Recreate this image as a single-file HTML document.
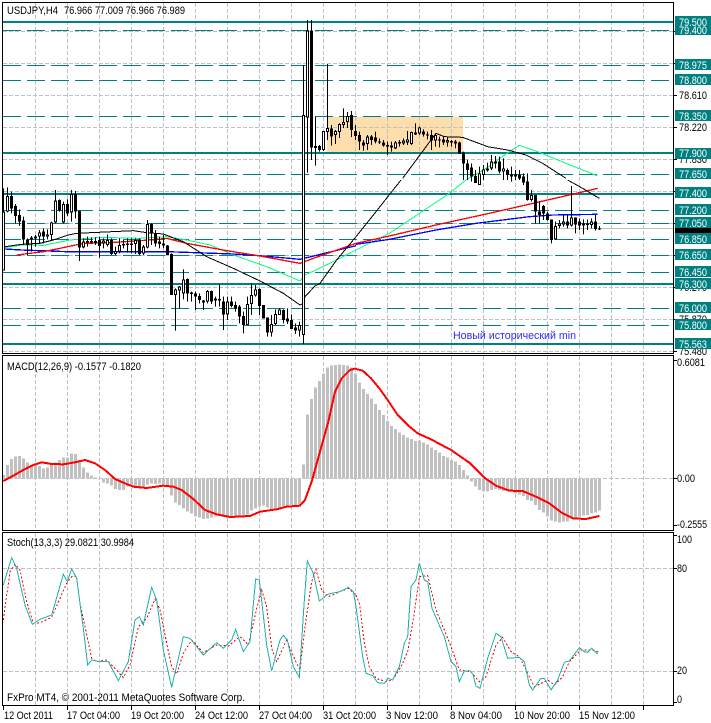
<!DOCTYPE html>
<html><head><meta charset="utf-8"><style>
html,body{margin:0;padding:0;background:#fff;width:711px;height:723px;overflow:hidden}
svg{display:block}
text{font-family:"Liberation Sans","Noto Sans CJK SC",sans-serif;font-size:11px;fill:#000}
.w text{fill:#fff}
.c{shape-rendering:crispEdges;fill:none}
</style></head><body>
<svg width="711" height="723" viewBox="0 0 711 723">
<rect width="711" height="723" fill="#fff"/>
<!-- peach -->
<rect x="327" y="117" width="136" height="36" fill="#ffdead"/>
<!-- grid -->
<path class="c" stroke="#c0c0c0" stroke-dasharray="4 2" d="M35.5 3V353M67.5 3V353M99.5 3V353M131.5 3V353M163.5 3V353M195.5 3V353M227.5 3V353M259.5 3V353M291.5 3V353M323.5 3V353M355.5 3V353M387.5 3V353M419.5 3V353M451.5 3V353M483.5 3V353M515.5 3V353M547.5 3V353M579.5 3V353M611.5 3V353M643.5 3V353
M35.5 356V530M67.5 356V530M99.5 356V530M131.5 356V530M163.5 356V530M195.5 356V530M227.5 356V530M259.5 356V530M291.5 356V530M323.5 356V530M355.5 356V530M387.5 356V530M419.5 356V530M451.5 356V530M483.5 356V530M515.5 356V530M547.5 356V530M579.5 356V530M611.5 356V530M643.5 356V530
M35.5 533V705M67.5 533V705M99.5 533V705M131.5 533V705M163.5 533V705M195.5 533V705M227.5 533V705M259.5 533V705M291.5 533V705M323.5 533V705M355.5 533V705M387.5 533V705M419.5 533V705M451.5 533V705M483.5 533V705M515.5 533V705M547.5 533V705M579.5 533V705M611.5 533V705M643.5 533V705
M3 31.5H673M3 63.5H673M3 95.5H673M3 127.5H673M3 159.5H673M3 191.5H673M3 223.5H673M3 255.5H673M3 287.5H673M3 319.5H673M3 351.5H673
M3 478.5H673M3 568.5H673M3 671.5H673"/>
<path class="c" stroke="#c0c0c0" d="M3 228.5H673"/>
<!-- levels -->
<path class="c" stroke="#008080" stroke-dasharray="18 6" d="M3 30.5H673M3 65.5H673M3 80.5H673M3 116.5H673M3 174.5H673M3 210.5H673M3 223.5H673M3 239.5H673M3 255.5H673M3 272.5H673M3 308.5H673M3 325.5H673"/>
<path class="c" stroke="#008080" stroke-width="2" d="M3 22H673M3 153H673M3 194H673M3 284H673M3 344H673"/>
<!-- MAs under candles -->
<g transform="translate(0 180) scale(.33333)" class="c" stroke-width="3">
<polyline stroke="#00ff7f" fill="none" points="15,203 65,195 130,196 210,180 300,172 420,175 500,170 560,180 630,195 700,225 800,260 900,303 915,285 1000,245 1068,210"/>
<polyline stroke="#0000ff" fill="none" stroke-width="4" points="15,207 65,210 200,215 500,215 700,222 790,228 900,238 1068,197"/>
<polyline stroke="#ff0000" fill="none" stroke-width="4" points="50,225 130,215 180,205 250,190 330,188 450,180 500,175 560,190 680,212 780,228 900,250 940,235 1068,190"/>
<polyline stroke="#000" fill="none" points="15,200 65,193 120,190 160,180 205,165 230,160 295,157 400,152 440,158 490,162 550,185 620,230 700,265 780,303 850,340 900,375 910,370 915,350 945,318 960,310 1010,240 1068,170"/>
</g>
<g transform="translate(356 180) scale(.33333)" class="c" stroke-width="3">
<polyline stroke="#00ff7f" fill="none" points="0,210 100,160 280,40 330,0"/>
<polyline stroke="#ff0000" fill="none" stroke-width="4" points="0,190 100,168 240,135 400,100 640,45 725,25"/>
<polyline stroke="#0000ff" fill="none" stroke-width="4" points="0,193 100,178 240,150 360,130 520,110 590,105 725,103"/>
<polyline stroke="#000" fill="none" points="0,170 60,95 135,0"/>
<polyline stroke="#000" fill="none" points="635,0 680,25 730,55"/>
</g>
<g transform="translate(356 0) scale(.33333)" class="c" stroke-width="3">
<polyline stroke="#00ff7f" fill="none" points="330,540 390,505 460,455 490,436 545,455 630,490 725,528"/>
<polyline stroke="#000" fill="none" points="140,535 225,420 240,400 265,410 320,412 395,440 455,450 510,465 560,490 630,535"/>
</g>
<!-- candles left -->
<g transform="translate(0 180) scale(1 .33333)" class="c">
<path stroke="#000" d="M3.5 25V272M7.5 22V97M11.5 35V100M15.5 72V130M19.5 88V138M23.5 110V195M27.5 175V225M31.5 168V215M35.5 165V200M39.5 150V190M43.5 145V190M47.5 148V178M51.5 125V180M55.5 30V130M59.5 58V95M63.5 65V130M67.5 58V108M71.5 30V125M75.5 33V115M79.5 92V243M83.5 175V205M87.5 170V200M91.5 172V190M95.5 172V195M99.5 170V233M103.5 175V205M107.5 163V200M111.5 175V225M115.5 200V225M119.5 175V220M123.5 180V205M127.5 175V218M131.5 175V220M135.5 175V222M139.5 175V225M143.5 195V225M147.5 120V205M151.5 130V195M155.5 150V200M159.5 170V205M163.5 165V205M167.5 195V225M171.5 220V345M175.5 325V452M179.5 318V385M183.5 268V358M187.5 295V365M191.5 335V365M195.5 335V390M199.5 340V370M203.5 360V390M207.5 330V370M211.5 332V372M215.5 350V380M219.5 313V380M223.5 350V450M227.5 350V420M231.5 350V382M235.5 365V395M239.5 375V430M243.5 395V460M247.5 350V435M251.5 310V405M255.5 315V350M259.5 325V405M263.5 375V415M267.5 412V470M271.5 405V470M275.5 388V435M279.5 385V405M283.5 388V430M287.5 385V432M291.5 403V447M295.5 430V462M299.5 425V470"/>
<path stroke="#000" stroke-width="3" d="M3.5 95V272M7.5 48V95M11.5 48V85M15.5 78V108M19.5 105V125M23.5 122V178M27.5 178V195M31.5 172V178M35.5 170V175M39.5 157V170M43.5 155V170M47.5 163V170M51.5 127V165M55.5 62V127M59.5 60V92M63.5 72V127M67.5 72V100M71.5 42V97M75.5 42V95M79.5 93V202M83.5 185V202M87.5 183V188M91.5 183V188M95.5 183V190M99.5 180V198M103.5 182V190M107.5 180V195M111.5 180V222M115.5 213V222M119.5 195V215M123.5 192V197M127.5 190V195M131.5 190V195M135.5 180V192M139.5 180V222M143.5 200V220M147.5 132V203M151.5 132V160M155.5 160V190M159.5 185V192M163.5 190V197M167.5 197V225M171.5 222V345M175.5 328V345M179.5 320V332M183.5 298V340M187.5 297V340M191.5 337V342M195.5 340V350M199.5 348V360M203.5 362V368M207.5 333V365M211.5 333V365M215.5 355V362M219.5 357V362M223.5 365V403M227.5 365V403M231.5 365V378M235.5 375V385M239.5 380V410M243.5 408V435M247.5 372V435M251.5 345V372M255.5 328V347M259.5 327V378M263.5 375V415M267.5 412V458M271.5 432V458M275.5 402V432M279.5 388V405M283.5 390V420M287.5 415V425M291.5 420V447M295.5 443V452M299.5 435V452"/>
<path stroke="#fff" d="M3.5 98V269M7.5 51V92M39.5 160V167M47.5 166V167M51.5 130V162M55.5 65V124M63.5 75V124M71.5 45V94M83.5 188V199M103.5 185V187M107.5 183V192M115.5 216V219M119.5 198V212M135.5 183V189M143.5 203V217M147.5 135V200M175.5 331V342M179.5 323V329M183.5 301V337M207.5 336V362M227.5 368V400M247.5 375V432M251.5 348V369M255.5 331V344M271.5 435V455M275.5 405V429M279.5 391V402M299.5 438V449"/>
</g>
<!-- candles middle/right, zoom y -->
<g transform="scale(1 .33333)" class="c">
<path stroke="#000" d="M303.5 195V1032M307.5 60V518M311.5 60V480M315.5 350V497M319.5 435V455M323.5 393V453M327.5 192V420M331.5 375V437M335.5 390V432M339.5 370V414M343.5 325V384M347.5 336V384M351.5 333V411M355.5 375V420
M359.5 395V450M363.5 420V452M367.5 405V450M371.5 405V435M375.5 395V430M379.5 415V432M383.5 420V440M387.5 425V465M391.5 425V455M395.5 423V447M399.5 420V440M403.5 415V435M407.5 393V435M411.5 395V435M415.5 370V405M419.5 380V405M423.5 388V410M427.5 395V418M431.5 390V450M435.5 400V440M439.5 410V442M443.5 410V435M447.5 410V440M451.5 420V440M455.5 420V445M459.5 425V462M463.5 455V540M467.5 480V540M471.5 490V545M475.5 510V549M479.5 500V555M483.5 495V540M487.5 488V515M491.5 465V510M495.5 468V505M499.5 470V520M503.5 475V540M507.5 505V540M511.5 500V545M515.5 510V540M519.5 510V540M523.5 520V555M527.5 520V602M531.5 570V605M535.5 585V670M539.5 605V670M543.5 615V660M547.5 635V662M551.5 658V730M555.5 665V720M559.5 660V685M563.5 645V680M567.5 645V685M571.5 558V680M575.5 652V700M579.5 655V690M583.5 658V703M587.5 658V690M591.5 655V685M595.5 645V692M599.5 678V690"/>
<path stroke="#000" stroke-width="3" d="M303.5 345V1005M307.5 92V352M311.5 92V442M315.5 438V444M319.5 438V450M323.5 393V450M327.5 384V396M331.5 385V410M335.5 393V405M339.5 372V396M343.5 366V375M347.5 348V366M351.5 345V390M355.5 393V408
M359.5 405V425M363.5 427V437M367.5 410V432M371.5 410V420M375.5 412V425M379.5 424V428M383.5 427V437M387.5 435V440M391.5 437V442M395.5 427V445M399.5 426V430M403.5 422V430M407.5 418V427M411.5 396V432M415.5 398V403M419.5 382V400M423.5 395V403M427.5 403V407M431.5 405V422M435.5 405V422M439.5 418V422M443.5 418V428M447.5 420V427M451.5 423V428M455.5 425V430M459.5 428V462M463.5 458V490M467.5 490V510M471.5 503V530M475.5 528V549M479.5 520V555M483.5 508V525M487.5 505V512M491.5 485V505M495.5 485V490M499.5 485V515M503.5 505V515M507.5 510V525M511.5 523V530M515.5 523V530M519.5 525V535M523.5 530V548M527.5 545V600M531.5 585V600M535.5 585V635M539.5 635V645M543.5 618V640M547.5 640V660M551.5 658V720M555.5 678V718M559.5 670V678M563.5 665V673M567.5 665V677M571.5 652V677M575.5 652V673M579.5 665V677M583.5 670V677M587.5 670V675M591.5 665V675M595.5 665V687M599.5 685V688"/>
<path stroke="#fff" d="M303.5 348V1002M307.5 95V349M323.5 396V447M327.5 387V393M335.5 396V402M339.5 375V393M343.5 369V372M347.5 351V363M367.5 413V429M395.5 430V442M403.5 425V427M407.5 421V424M411.5 399V429M419.5 385V397M435.5 408V419M447.5 423V424M479.5 523V552M483.5 511V522M491.5 488V502M503.5 508V512M531.5 588V597M555.5 681V715M559.5 673V675M563.5 668V670M571.5 655V674M591.5 668V672"/>
</g>
<!-- MACD histogram -->
<g transform="translate(0 355) scale(1 .33333)" class="c">
<path stroke="#c0c0c0" stroke-width="3" d="M3.5 370V360M7.5 370V330M11.5 370V312M15.5 370V305M19.5 370V303M23.5 370V310M27.5 370V322M31.5 370V330M35.5 370V325M39.5 370V333M43.5 370V340M47.5 370V338M51.5 370V330M55.5 370V322M59.5 370V315M63.5 370V307M67.5 370V308M71.5 370V295M75.5 370V297M79.5 370V315M83.5 370V338M87.5 370V352M91.5 370V362M95.5 370V368M99.5 370V372M103.5 370V382M107.5 370V385M111.5 370V392M115.5 370V402M119.5 370V405M123.5 370V405M127.5 370V395M131.5 370V390M135.5 370V393M139.5 370V395M143.5 370V395M147.5 370V388M151.5 370V385M155.5 370V387M159.5 370V385M163.5 370V388M167.5 370V395M171.5 370V422M175.5 370V442M179.5 370V450M183.5 370V460M187.5 370V470M191.5 370V475M195.5 370V485M199.5 370V488M203.5 370V492M207.5 370V490M211.5 370V488M215.5 370V485M219.5 370V480M223.5 370V483M227.5 370V488M231.5 370V488M235.5 370V487M239.5 370V487M243.5 370V485M247.5 370V478M251.5 370V467M255.5 370V460M259.5 370V455M263.5 370V452M267.5 370V458M271.5 370V462M275.5 370V462M279.5 370V460M283.5 370V455M287.5 370V452M291.5 370V450M295.5 370V452M299.5 370V450M303.5 370V328M307.5 370V178M311.5 370V132M315.5 370V97M319.5 370V78M323.5 370V55M327.5 370V38M331.5 370V32M335.5 370V30M339.5 370V28M343.5 370V30M347.5 370V32M351.5 370V38M355.5 370V55M359.5 370V82M363.5 370V102M367.5 370V117M371.5 370V130M375.5 370V147M379.5 370V165M383.5 370V180M387.5 370V198M391.5 370V213M395.5 370V222M399.5 370V232M403.5 370V240M407.5 370V248M411.5 370V252M415.5 370V258M419.5 370V257M423.5 370V263M427.5 370V268M431.5 370V278M435.5 370V285M439.5 370V292M443.5 370V303M447.5 370V307M451.5 370V315M455.5 370V320M459.5 370V330M463.5 370V345M467.5 370V362M471.5 370V380M475.5 370V395M479.5 370V405M483.5 370V408M487.5 370V410M491.5 370V405M495.5 370V402M499.5 370V405M503.5 370V408M507.5 370V408M511.5 370V410M515.5 370V415M519.5 370V418M523.5 370V423M527.5 370V435M531.5 370V438M535.5 370V450M539.5 370V465M543.5 370V473M547.5 370V485M551.5 370V497M555.5 370V500M559.5 370V503M563.5 370V500M567.5 370V500M571.5 370V490M575.5 370V488M579.5 370V485M583.5 370V482M587.5 370V480M591.5 370V475M595.5 370V473M599.5 370V467"/>
</g>
<g transform="translate(0 355) scale(.33333)" class="c" fill="none">
<polyline fill="none" stroke="#ff0000" stroke-width="6" points="10,378 40,362 70,345 100,330 125,322 155,327 190,328 225,322 255,315 285,325 315,345 345,372 375,385 400,395 440,399 490,392 520,395 545,405 580,432 615,465 650,478 690,486 750,483 780,470 830,463 860,455 900,452 915,435 935,380 960,290 985,200 1005,110 1025,70 1050,45 1068,40"/>
</g>
<g transform="translate(356 355) scale(.33333)" class="c" fill="none">
<polyline fill="none" stroke="#ff0000" stroke-width="6" points="0,42 20,47 45,70 70,100 95,135 125,180 155,210 185,235 225,253 285,285 340,323 385,368 420,392 460,407 500,408 540,425 580,445 620,475 650,490 690,492 730,483"/>
</g>
<!-- Stoch -->
<g transform="translate(0 530) scale(.33333)" class="c" fill="none">
<polyline fill="none" stroke="#ff0000" stroke-width="3" stroke-dasharray="6 6" points="10,270 30,125 45,103 60,120 80,215 100,280 120,278 155,262 180,205 200,160 215,140 230,140 240,220 255,290 275,385 290,395 320,390 350,420 370,443 390,405 415,290 440,265 465,207 480,240 500,340 515,410 530,432 550,370 575,330 610,368 650,345 685,348 720,320 745,345 770,235 785,180 800,230 815,355 830,395 860,330 885,390 900,420 915,290 935,155 948,118 965,180 985,200 1020,185 1045,175 1068,195"/>
<polyline fill="none" stroke="#20b2aa" stroke-width="3" points="10,165 35,83 50,115 75,225 97,283 120,268 155,255 190,133 202,155 215,117 230,145 250,295 263,405 275,390 300,395 325,395 355,452 385,395 405,270 418,260 430,285 455,172 470,210 490,360 515,472 550,320 570,325 610,375 650,338 670,355 695,330 707,298 730,365 750,335 767,147 778,150 800,345 815,423 840,330 850,316 862,330 880,410 898,442 912,225 922,93 940,130 958,213 985,192 1020,185 1045,172 1060,185 1068,230"/>
</g>
<g transform="translate(356 530) scale(.33333)" class="c" fill="none">
<polyline fill="none" stroke="#ff0000" stroke-width="3" stroke-dasharray="6 6" points="0,195 10,220 25,340 40,410 60,445 90,455 110,450 135,410 155,365 175,250 190,140 215,137 240,240 265,300 285,350 310,420 345,425 370,455 390,440 420,345 440,322 465,365 490,380 520,440 535,470 575,450 595,465 620,440 640,395 675,360 710,360 728,367"/>
<polyline fill="none" stroke="#20b2aa" stroke-width="3" points="0,230 20,380 30,430 50,437 65,458 85,460 95,445 110,450 130,410 145,340 155,320 165,170 180,150 190,100 205,150 215,155 228,235 265,320 285,395 300,410 310,455 325,423 340,422 350,430 360,468 372,475 395,385 420,310 435,320 455,385 490,382 505,395 520,465 530,480 555,445 565,445 585,480 605,450 625,397 640,393 670,353 685,365 695,367 707,355 725,373"/>
</g>
<!-- frames -->
<path class="c" stroke="#000" d="M2.5 2.5H673.5V353.5H2.5ZM2.5 355.5H673.5V530.5H2.5ZM2.5 532.5H673.5V705.5H2.5Z
M673 31.5H677M673 63.5H677M673 95.5H677M673 127.5H677M673 159.5H677M673 191.5H677M673 223.5H677M673 255.5H677M673 287.5H677M673 319.5H677M673 351.5H677M673 360.5H677M673 478.5H677M673 525.5H677M673 535.5H677M673 568.5H677M673 671.5H677M673 702.5H677
M3.5 706V710M67.5 706V710M131.5 706V710M195.5 706V710M259.5 706V710M323.5 706V710M387.5 706V710M451.5 706V710M515.5 706V710M579.5 706V710M643.5 706V710"/>
<!-- axis labels -->
<text x="679" y="99" textLength="28" lengthAdjust="spacingAndGlyphs">78.610</text>
<text x="679" y="131" textLength="28" lengthAdjust="spacingAndGlyphs">78.220</text>
<text x="679" y="163" textLength="28" lengthAdjust="spacingAndGlyphs">77.830</text>
<text x="679" y="195" textLength="28" lengthAdjust="spacingAndGlyphs">77.440</text>
<text x="679" y="291" textLength="28" lengthAdjust="spacingAndGlyphs">76.270</text>
<text x="679" y="323" textLength="28" lengthAdjust="spacingAndGlyphs">75.870</text>
<text x="679" y="355" textLength="28" lengthAdjust="spacingAndGlyphs">75.480</text>
<rect x="675" y="224" width="36" height="11" fill="#000"/>
<g fill="#008080">
<rect x="675" y="24" width="36" height="11"/><rect x="675" y="16" width="36" height="11"/><rect x="675" y="59" width="36" height="11"/><rect x="675" y="74" width="36" height="11"/><rect x="675" y="110" width="36" height="11"/><rect x="675" y="148" width="36" height="11"/><rect x="675" y="168" width="36" height="11"/><rect x="675" y="187" width="36" height="11"/><rect x="675" y="204" width="36" height="11"/><rect x="675" y="217" width="36" height="11"/><rect x="675" y="233" width="36" height="11"/><rect x="675" y="249" width="36" height="11"/><rect x="675" y="266" width="36" height="11"/><rect x="675" y="278" width="36" height="11"/><rect x="675" y="302" width="36" height="11"/><rect x="675" y="319" width="36" height="11"/><rect x="675" y="338" width="36" height="11"/>
</g>
<g class="w">
<text x="679" y="34" textLength="28" lengthAdjust="spacingAndGlyphs">79.400</text>
<rect x="675" y="16" width="36" height="9" fill="#008080"/>
<text x="679" y="26" textLength="28" lengthAdjust="spacingAndGlyphs">79.500</text>
<text x="679" y="69" textLength="28" lengthAdjust="spacingAndGlyphs">78.975</text>
<text x="679" y="84" textLength="28" lengthAdjust="spacingAndGlyphs">78.800</text>
<text x="679" y="120" textLength="28" lengthAdjust="spacingAndGlyphs">78.350</text>
<text x="679" y="157" textLength="28" lengthAdjust="spacingAndGlyphs">77.900</text>
<text x="679" y="178" textLength="28" lengthAdjust="spacingAndGlyphs">77.650</text>
<text x="679" y="197" textLength="28" lengthAdjust="spacingAndGlyphs">77.400</text>
<text x="679" y="214" textLength="28" lengthAdjust="spacingAndGlyphs">77.200</text>
<text x="679" y="227" textLength="28" lengthAdjust="spacingAndGlyphs">77.050</text>
<text x="679" y="243" textLength="28" lengthAdjust="spacingAndGlyphs">76.850</text>
<text x="679" y="259" textLength="28" lengthAdjust="spacingAndGlyphs">76.650</text>
<text x="679" y="276" textLength="28" lengthAdjust="spacingAndGlyphs">76.450</text>
<text x="679" y="288" textLength="28" lengthAdjust="spacingAndGlyphs">76.300</text>
<text x="679" y="312" textLength="28" lengthAdjust="spacingAndGlyphs">76.000</text>
<text x="679" y="329" textLength="28" lengthAdjust="spacingAndGlyphs">75.800</text>
<text x="679" y="348" textLength="28" lengthAdjust="spacingAndGlyphs">75.563</text>
</g>
<text x="677" y="366" textLength="28" lengthAdjust="spacingAndGlyphs">0.6081</text>
<text x="677" y="482" textLength="18" lengthAdjust="spacingAndGlyphs">0.00</text>
<text x="677" y="528" textLength="30" lengthAdjust="spacingAndGlyphs">-0.2555</text>
<text x="677" y="543" textLength="15" lengthAdjust="spacingAndGlyphs">100</text>
<text x="677" y="572" textLength="10" lengthAdjust="spacingAndGlyphs">80</text>
<text x="677" y="674" textLength="10" lengthAdjust="spacingAndGlyphs">20</text>
<text x="677" y="703" textLength="5" lengthAdjust="spacingAndGlyphs">0</text>
<!-- titles -->
<text x="7" y="14" textLength="51" lengthAdjust="spacingAndGlyphs">USDJPY,H4</text>
<text x="64" y="14" textLength="121" lengthAdjust="spacingAndGlyphs">76.966 77.009 76.966 76.989</text>
<text x="7" y="370" textLength="134" lengthAdjust="spacingAndGlyphs">MACD(12,26,9) -0.1577 -0.1820</text>
<text x="7" y="546" textLength="127" lengthAdjust="spacingAndGlyphs">Stoch(13,3,3) 29.0821 30.9984</text>
<text x="7" y="701" textLength="238" lengthAdjust="spacingAndGlyphs">FxPro MT4, © 2001-2011 MetaQuotes Software Corp.</text>
<text x="453" y="339" textLength="123" lengthAdjust="spacingAndGlyphs" style="fill:#2a2aff">Новый исторический min</text>
<!-- time -->
<text x="4" y="719" textLength="49" lengthAdjust="spacingAndGlyphs">12 Oct 2011</text>
<text x="67" y="719" textLength="53" lengthAdjust="spacingAndGlyphs">17 Oct 04:00</text>
<text x="131" y="719" textLength="53" lengthAdjust="spacingAndGlyphs">19 Oct 20:00</text>
<text x="195" y="719" textLength="53" lengthAdjust="spacingAndGlyphs">24 Oct 12:00</text>
<text x="259" y="719" textLength="53" lengthAdjust="spacingAndGlyphs">27 Oct 04:00</text>
<text x="323" y="719" textLength="53" lengthAdjust="spacingAndGlyphs">31 Oct 20:00</text>
<text x="386" y="719" textLength="52" lengthAdjust="spacingAndGlyphs">3 Nov 12:00</text>
<text x="450" y="719" textLength="52" lengthAdjust="spacingAndGlyphs">8 Nov 04:00</text>
<text x="514" y="719" textLength="56" lengthAdjust="spacingAndGlyphs">10 Nov 20:00</text>
<text x="579" y="719" textLength="56" lengthAdjust="spacingAndGlyphs">15 Nov 12:00</text>
</svg>
</body></html>
